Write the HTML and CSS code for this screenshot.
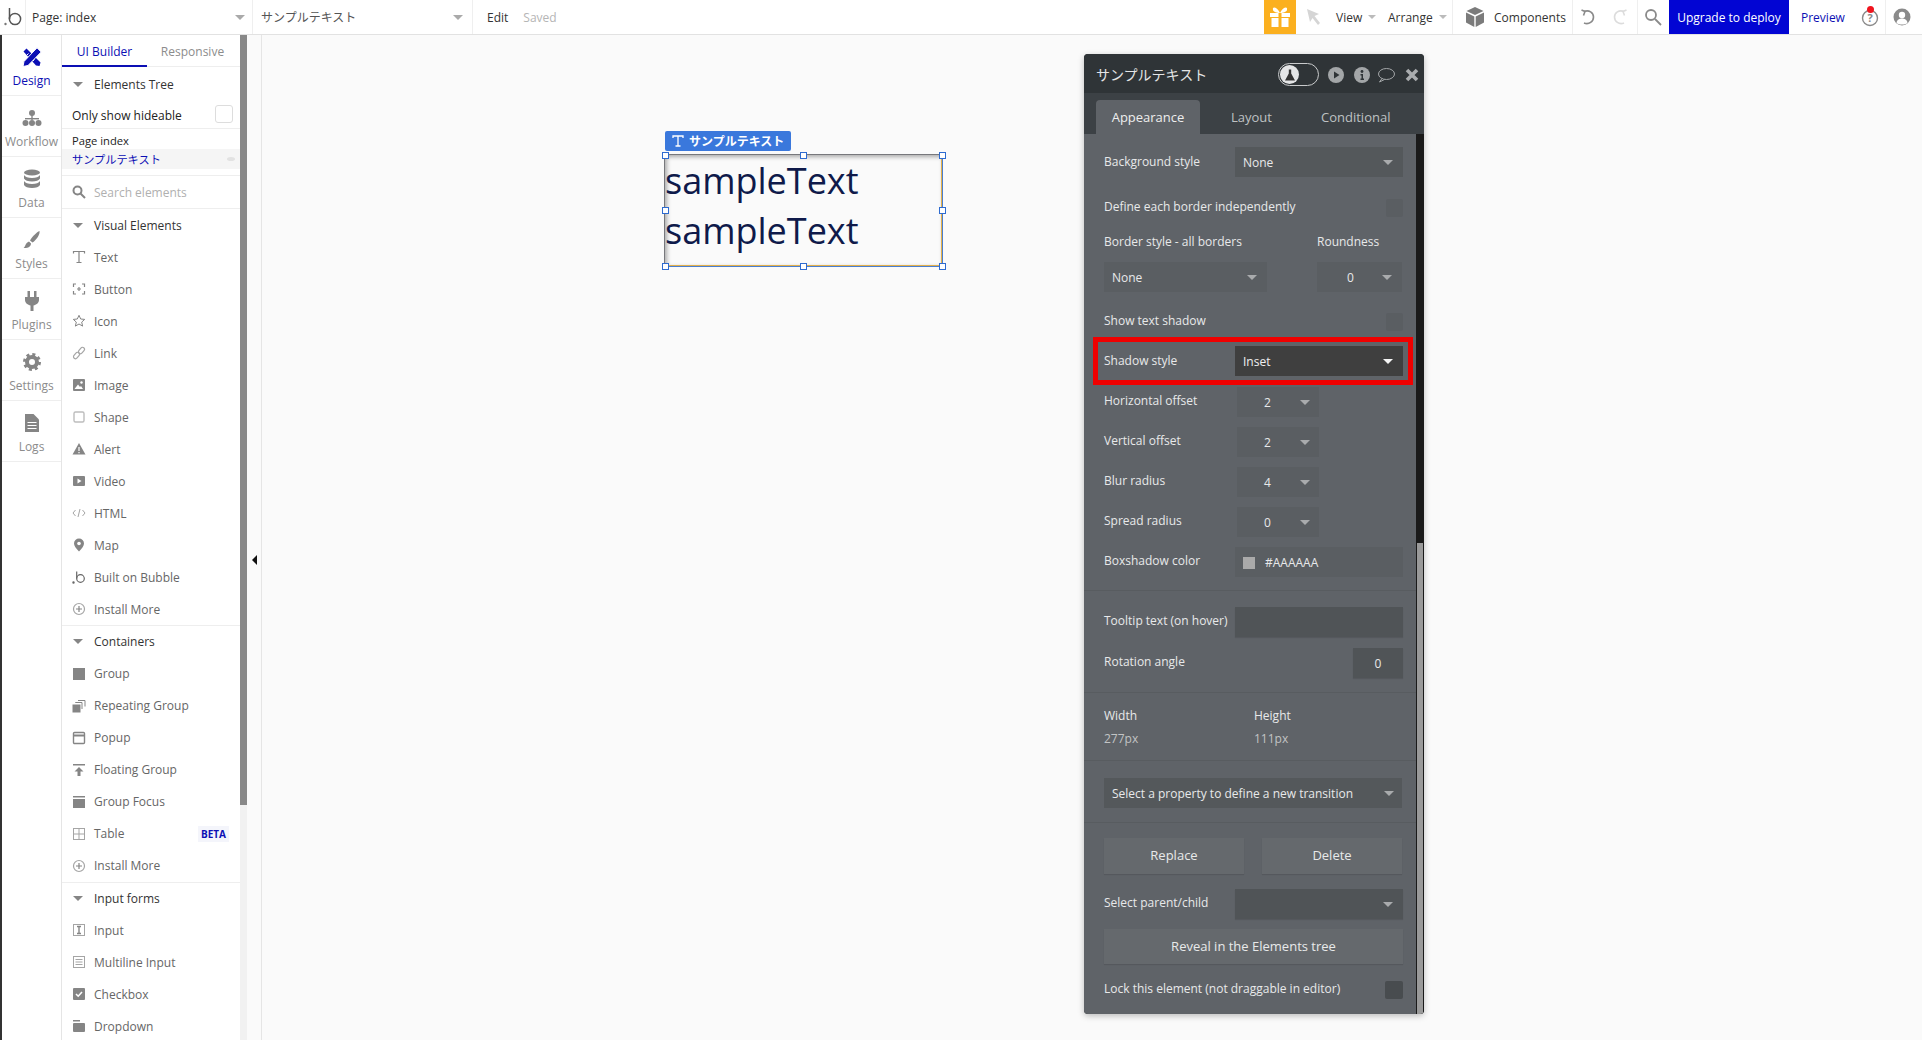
FILE: index.html
```html
<!DOCTYPE html>
<html lang="en">
<head>
    <meta charset="UTF-8">
    <title>Bubble editor</title>
    <link rel="stylesheet" href="styles.css">
</head>
<body>
    <header class="topbar">
        <div class="top-logo">
            <svg width="20" height="22" viewBox="0 0 20 22"><circle cx="12" cy="13" r="5.6" fill="none" stroke="#555" stroke-width="1.5"/><path d="M6.5 2v11" stroke="#555" stroke-width="1.5"/><circle cx="2.5" cy="18" r="1.2" fill="#777"/></svg>
        </div>
        <div class="top-select page-select"><span>Page: index</span><i class="caret"></i></div>
        <div class="top-select element-select"><span>サンプルテキスト</span><i class="caret"></i></div>
        <div class="top-edit"><span>Edit</span><span class="saved">Saved</span></div>
        <div class="top-gift">
            <svg width="22" height="22" viewBox="0 0 22 22" fill="#fff"><rect x="1" y="7" width="8.500" height="4"/><rect x="12.500" y="7" width="8.500" height="4"/><rect x="2.500" y="12" width="7" height="9"/><rect x="12.500" y="12" width="7" height="9"/><path d="M11 7C8 1 3 0 4 4c.4 1.800 4 3 7 3zm0 0c3-6 8-7 7-3-.4 1.800-4 3-7 3z"/></svg>
        </div>
        <div class="top-cursor">
            <svg width="16" height="18" viewBox="0 0 16 18" fill="#d5d5d5"><path d="M1 1l12 5-4.500 2L14 15l-2 2-5.500-7L4 14z"/></svg>
        </div>
        <div class="top-menu view-menu"><span>View</span><i class="caret small"></i></div>
        <div class="top-menu arrange-menu"><span>Arrange</span><i class="caret small"></i></div>
        <div class="top-components">
            <svg width="20" height="22" viewBox="0 0 20 22" fill="#7b7b7b"><path d="M10 1l8.500 4L10 9 1.500 5z"/><path d="M1 6.500l8.300 4V21L1 16.500z"/><path d="M19 6.500l-8.300 4V21l8.300-4.500z"/></svg>
            <span>Components</span>
        </div>
        <div class="top-history">
            <svg width="18" height="18" viewBox="0 0 18 18" fill="none" stroke="#8a8a8a" stroke-width="1.600"><path d="M5 3.500c5-2 9.500 1 9.500 5.500s-4.500 8-9.500 6"/><path d="M2.500 2l3.500 1.500-1.500 4"/></svg>
            <svg width="18" height="18" viewBox="0 0 18 18" fill="none" stroke="#dcdcdc" stroke-width="1.600"><path d="M13 3.500c-5-2-9.500 1-9.500 5.500s4.500 8 9.500 6"/><path d="M15.500 2L12 3.500l1.500 4"/></svg>
        </div>
        <div class="top-search">
            <svg width="18" height="18" viewBox="0 0 18 18" fill="none" stroke="#8a8a8a" stroke-width="1.800"><circle cx="7" cy="7" r="5"/><path d="M11 11l6 6"/></svg>
        </div>
        <div class="top-upgrade">Upgrade to deploy</div>
        <div class="top-preview">Preview</div>
        <div class="top-help">
            <svg width="18" height="20" viewBox="0 0 18 20"><circle cx="9" cy="11" r="7.500" fill="none" stroke="#8a8a8a" stroke-width="1.400"/><text x="9" y="15" text-anchor="middle" class="help-mark">?</text></svg>
            <i class="help-dot"></i>
        </div>
        <div class="top-user">
            <svg width="18" height="18" viewBox="0 0 18 18"><circle cx="9" cy="9" r="8.500" fill="#8a8a8a"/><circle cx="9" cy="7" r="3.200" fill="#fff"/><path d="M3.500 15c.5-3.500 3-4.500 5.500-4.500s5 1 5.500 4.500c-3 2-8 2-11 0z" fill="#fff"/></svg>
        </div>
    </header>

    <div class="main">
        <nav class="rail">
            <div class="rail-item active">
                <svg width="20" height="20" viewBox="0 0 20 20"><path d="M1.500 4.500l3-3 14 14-1 3.500-3.500-.5z" fill="#0c0fb4"/><path d="M5 8l1.500-1.500M8 11l1.500-1.500M11 14l1.500-1.500" stroke="#fff" stroke-width="1"/><path d="M15 .8l4.200 4.200L6 18.500l-5 1 1-5z" fill="#0c0fb4" stroke="#fff" stroke-width="1"/></svg>
                <span>Design</span>
            </div>
            <div class="rail-item">
                <svg width="20" height="18" viewBox="0 0 20 18" fill="#858585"><circle cx="10" cy="4" r="3"/><rect x="9.300" y="6" width="1.400" height="5"/><rect x="3" y="9" width="14" height="1.400"/><circle cx="3.500" cy="14" r="3"/><circle cx="10" cy="14" r="3"/><circle cx="16.500" cy="14" r="3"/></svg>
                <span>Workflow</span>
            </div>
            <div class="rail-item">
                <svg width="18" height="20" viewBox="0 0 18 20" fill="#858585"><ellipse cx="9" cy="3.500" rx="8" ry="3"/><path d="M1 6c1 2 4 3 8 3s7-1 8-3v3.500c-1 2-4 3-8 3s-7-1-8-3z"/><path d="M1 12c1 2 4 3 8 3s7-1 8-3v4c-1 2-4 3-8 3s-7-1-8-3z"/></svg>
                <span>Data</span>
            </div>
            <div class="rail-item">
                <svg width="20" height="20" viewBox="0 0 20 20" fill="#858585"><path d="M17.500 1c.8 3-3 9-7 11.500l-2.500-2C10 6.500 15 2 17.500 1z"/><path d="M7 11.500l2 2C9 17 5 18.500 1.500 18c2-1 1.500-5 5.500-6.500z"/></svg>
                <span>Styles</span>
            </div>
            <div class="rail-item">
                <svg width="16" height="20" viewBox="0 0 16 20" fill="#858585"><rect x="3.500" y="0" width="2.500" height="6"/><rect x="10" y="0" width="2.500" height="6"/><path d="M1 6h14v3c0 3-3 5-5.500 5.500V20h-3v-5.500C4 14 1 12 1 9z"/></svg>
                <span>Plugins</span>
            </div>
            <div class="rail-item">
                <svg width="18" height="18" viewBox="0 0 18 18"><circle cx="9" cy="9" r="5" fill="none" stroke="#858585" stroke-width="4"/><circle cx="9" cy="9" r="7.500" fill="none" stroke="#858585" stroke-width="3" stroke-dasharray="3 2.900"/></svg>
                <span>Settings</span>
            </div>
            <div class="rail-item">
                <svg width="14" height="18" viewBox="0 0 14 18"><path d="M0 0h8.500L14 5.500V18H0z" fill="#858585"/><path d="M2.500 8.500h9M2.500 11.500h9M2.500 14.500h9" stroke="#fff" stroke-width="1"/></svg>
                <span>Logs</span>
            </div>
        </nav>

        <aside class="panel">
            <div class="panel-tabs">
                <div class="panel-tab active">UI Builder</div>
                <div class="panel-tab second">Responsive</div>
            </div>
            <div class="section-head tree-head"><i class="caret"></i><span>Elements Tree</span></div>
            <div class="hideable"><span>Only show hideable</span><i class="hide-check"></i></div>
            <div class="tree">
                <div class="tree-page">Page index</div>
                <div class="tree-selected"><span>サンプルテキスト</span><i class="eye"></i></div>
            </div>
            <div class="search">
                <svg width="14" height="14" viewBox="0 0 14 14" fill="none" stroke="#858585" stroke-width="2"><circle cx="5.500" cy="5.500" r="4"/><path d="M8.500 8.500l4.500 4.500"/></svg>
                <span>Search elements</span>
            </div>

            <div class="section-head"><i class="caret"></i><span>Visual Elements</span></div>
            <div class="el"><svg viewBox="0 0 14 14" fill="none" stroke="#858585" stroke-width="1.200"><path d="M1.500 3.500V1.500h11v2M7 1.500v11M4.500 12.500h5"/></svg><span>Text</span></div>
            <div class="el"><svg viewBox="0 0 14 14" fill="none" stroke="#858585" stroke-width="1.200"><path d="M4 2H1.500v3M10 2h2.500v3M4 12H1.500V9M10 12h2.500V9M7 5v4M5 7h4"/></svg><span>Button</span></div>
            <div class="el"><svg viewBox="0 0 14 14" fill="none" stroke="#858585"><path d="M7 1.300l1.700 3.700 4 .4-3 2.700.9 4L7 10l-3.600 2.100.9-4-3-2.700 4-.4z"/></svg><span>Icon</span></div>
            <div class="el"><svg viewBox="0 0 14 14" fill="none" stroke="#a5a5a5" stroke-width="1.200"><rect x="7.500" y="1" width="4" height="7" rx="2" transform="rotate(40 9.500 4.500)"/><rect x="2.500" y="6" width="4" height="7" rx="2" transform="rotate(40 4.500 9.500)"/></svg><span>Link</span></div>
            <div class="el"><svg viewBox="0 0 14 14"><rect x="1" y="1" width="12" height="12" rx="1" fill="#858585"/><path d="M2.500 11l3.500-4.500 2 2.500 1-1 2 3z" fill="#fff"/><circle cx="9.500" cy="4.500" r="1.200" fill="#fff"/></svg><span>Image</span></div>
            <div class="el"><svg viewBox="0 0 14 14"><rect x="2" y="2" width="10" height="10" rx="1.500" fill="none" stroke="#bdbdbd" stroke-width="1.400"/></svg><span>Shape</span></div>
            <div class="el"><svg viewBox="0 0 14 14"><path d="M7 1l6.500 11.500h-13z" fill="#858585"/><path d="M7 5v4M7 10v1.300" stroke="#fff" stroke-width="1.200"/></svg><span>Alert</span></div>
            <div class="el"><svg viewBox="0 0 14 14"><rect x="1" y="2" width="12" height="10" rx="1" fill="#858585"/><path d="M5.500 4.500l4 2.500-4 2.500z" fill="#fff"/></svg><span>Video</span></div>
            <div class="el"><svg viewBox="0 0 14 14" fill="none" stroke="#a5a5a5"><path d="M3.500 4L1 7l2.500 3M10.500 4L13 7l-2.500 3M8 3L6 11"/></svg><span>HTML</span></div>
            <div class="el"><svg viewBox="0 0 14 14"><path d="M7 13.500C4 10 2 8 2 5.500a5 5 0 0 1 10 0C12 8 10 10 7 13.500z" fill="#858585"/><circle cx="7" cy="5.500" r="1.800" fill="#fff"/></svg><span>Map</span></div>
            <div class="el"><svg viewBox="0 0 14 14" fill="none" stroke="#666" stroke-width="1.200"><circle cx="8.500" cy="8.500" r="3.800"/><path d="M4.700 1.500v7"/><circle cx="1.500" cy="12.500" r=".6" fill="#666"/></svg><span>Built on Bubble</span></div>
            <div class="el"><svg viewBox="0 0 14 14" fill="none" stroke="#a5a5a5" stroke-width="1.200"><circle cx="7" cy="7" r="5.500"/><path d="M7 4v6M4 7h6" stroke="#858585"/></svg><span>Install More</span></div>

            <div class="section-head split"><i class="caret"></i><span>Containers</span></div>
            <div class="el"><svg viewBox="0 0 14 14"><rect x="1" y="1" width="12" height="12" fill="#858585"/></svg><span>Group</span></div>
            <div class="el"><svg viewBox="0 0 14 14" fill="none" stroke="#858585"><rect x="1" y="6" width="7" height="7" fill="#858585"/><path d="M3.500 4V3.500H10V10M6 1.500h7v6"/></svg><span>Repeating Group</span></div>
            <div class="el"><svg viewBox="0 0 14 14" fill="none" stroke="#858585" stroke-width="1.400"><rect x="1.500" y="1.500" width="11" height="11" rx="1"/><path d="M1.500 4.500h11" stroke-width="2"/></svg><span>Popup</span></div>
            <div class="el"><svg viewBox="0 0 14 14" fill="#858585"><rect x="1" y="1" width="12" height="1.500"/><path d="M7 4l4.500 4.500H8.500V13h-3V8.500h-3z"/></svg><span>Floating Group</span></div>
            <div class="el"><svg viewBox="0 0 14 14" fill="#858585"><rect x="1" y="1" width="12" height="1.500"/><rect x="1" y="4" width="12" height="9"/></svg><span>Group Focus</span></div>
            <div class="el"><svg viewBox="0 0 14 14" fill="none" stroke="#a5a5a5"><rect x="1.500" y="1.500" width="11" height="11"/><path d="M7 1.500v11M1.500 7h11"/></svg><span>Table</span><b class="beta">BETA</b></div>
            <div class="el"><svg viewBox="0 0 14 14" fill="none" stroke="#a5a5a5" stroke-width="1.200"><circle cx="7" cy="7" r="5.500"/><path d="M7 4v6M4 7h6" stroke="#858585"/></svg><span>Install More</span></div>

            <div class="section-head split"><i class="caret"></i><span>Input forms</span></div>
            <div class="el"><svg viewBox="0 0 14 14" fill="none" stroke="#a5a5a5"><rect x="1.500" y="1.500" width="11" height="11"/><path d="M5 3.500h4M5 10.500h4M7 3.500v7" stroke="#858585" stroke-width="1.400"/></svg><span>Input</span></div>
            <div class="el"><svg viewBox="0 0 14 14" fill="none" stroke="#a5a5a5"><rect x="1.500" y="1.500" width="11" height="11"/><path d="M3.500 4.500h7M3.500 7h7M3.500 9.500h7"/></svg><span>Multiline Input</span></div>
            <div class="el"><svg viewBox="0 0 14 14"><rect x="1" y="1" width="12" height="12" rx="1" fill="#858585"/><path d="M4 7l2.200 2.200L10 5" fill="none" stroke="#fff" stroke-width="1.600"/></svg><span>Checkbox</span></div>
            <div class="el"><svg viewBox="0 0 14 14" fill="#858585"><rect x="1" y="1" width="7" height="1.500"/><rect x="1" y="4" width="12" height="9" rx="1"/></svg><span>Dropdown</span></div>
        </aside>

        <div class="panel-scroll"><div class="panel-thumb"></div></div>
        <div class="collapse-strip"><i class="collapse-arrow"></i></div>
        <div class="canvas"></div>
    </div>

    <!-- selected element on the page canvas -->
    <div class="selected-tag">
        <svg width="12" height="12" viewBox="0 0 12 12" fill="none" stroke="#fff" stroke-width="1.300"><path d="M1 3V1h10v2M6 1v10M3.500 11h5"/></svg>
        <span>サンプルテキスト</span>
    </div>
    <div class="selected-box">
        <p>sampleText<br>sampleText</p>
        <i class="handle h-tl"></i><i class="handle h-tm"></i><i class="handle h-tr"></i>
        <i class="handle h-ml"></i><i class="handle h-mr"></i>
        <i class="handle h-bl"></i><i class="handle h-bm"></i><i class="handle h-br"></i>
    </div>

    <!-- property editor window -->
    <section class="editor">
        <div class="editor-title">
            <span class="editor-name">サンプルテキスト</span>
            <div class="lab-toggle">
                <i class="lab-knob"><svg width="12" height="12" viewBox="0 0 12 12" fill="#333"><path d="M4.800 .5h2.400v4L11 11.500H1l3.800-7z"/></svg></i>
            </div>
            <svg class="ed-icon play" width="16" height="16" viewBox="0 0 16 16"><circle cx="8" cy="8" r="8" fill="#a3a6a8"/><path d="M6 4.500L11.500 8 6 11.500z" fill="#2f3437"/></svg>
            <svg class="ed-icon info" width="16" height="16" viewBox="0 0 16 16"><circle cx="8" cy="8" r="8" fill="#a3a6a8"/><path d="M6.500 7h2.500v4.500h1V13H6.500v-1.500h1V8.500h-1z" fill="#2f3437"/><circle cx="8" cy="4.500" r="1.400" fill="#2f3437"/></svg>
            <svg class="ed-icon chat" width="18" height="16" viewBox="0 0 18 16" fill="none" stroke="#a3a6a8"><ellipse cx="9.500" cy="7" rx="8" ry="5.500"/><path d="M5 11.500L2.500 15l5-2.500"/></svg>
            <svg class="ed-icon close" width="14" height="14" viewBox="0 0 14 14" stroke="#a9acae" stroke-width="3.600"><path d="M2 2l10 10M12 2L2 12"/></svg>
        </div>
        <div class="editor-tabs">
            <div class="editor-tab active">Appearance</div>
            <div class="editor-tab layout">Layout</div>
            <div class="editor-tab conditional">Conditional</div>
        </div>
        <div class="editor-wrap">
            <div class="editor-body">
                <div class="row r-bg"><label>Background style</label><div class="sel wide"><span>None</span><i class="caret"></i></div></div>
                <div class="row r-check r-define"><label>Define each border independently</label><i class="check"></i></div>
                <div class="row r-heading"><label class="l-border">Border style - all borders</label><label>Roundness</label></div>
                <div class="row r-border"><div class="sel border-sel"><span>None</span><i class="caret"></i></div><div class="sel round-sel"><span>0</span><i class="caret"></i></div></div>
                <div class="row r-check r-shadow"><label>Show text shadow</label><i class="check"></i></div>
                <div class="row highlight"><label>Shadow style</label><div class="sel wide dark"><span>Inset</span><i class="caret"></i></div></div>
                <div class="row r-first"><label>Horizontal offset</label><div class="sel num"><span>2</span><i class="caret"></i></div></div>
                <div class="row r-next"><label>Vertical offset</label><div class="sel num"><span>2</span><i class="caret"></i></div></div>
                <div class="row r-next"><label>Blur radius</label><div class="sel num"><span>4</span><i class="caret"></i></div></div>
                <div class="row r-next"><label>Spread radius</label><div class="sel num"><span>0</span><i class="caret"></i></div></div>
                <div class="row r-next"><label>Boxshadow color</label><div class="sel wide color"><i class="swatch"></i><span>#AAAAAA</span></div></div>
                <hr class="d-color">
                <div class="row r-tooltip"><label>Tooltip text (on hover)</label><div class="field wide"></div></div>
                <div class="row r-rotation"><label>Rotation angle</label><div class="field angle">0</div></div>
                <hr class="d-rotation">
                <div class="row r-size"><label class="l-size">Width</label><label>Height</label></div>
                <div class="row r-size-val"><span class="l-size">277px</span><span>111px</span></div>
                <hr class="d-size">
                <div class="row r-transition"><div class="sel full"><span>Select a property to define a new transition</span><i class="caret"></i></div></div>
                <hr class="d-transition">
                <div class="row r-buttons"><div class="btn">Replace</div><div class="btn">Delete</div></div>
                <div class="row r-parent"><label>Select parent/child</label><div class="field wide"><i class="caret"></i></div></div>
                <div class="row r-reveal"><div class="btn reveal">Reveal in the Elements tree</div></div>
                <div class="row r-lock"><label>Lock this element (not draggable in editor)</label><i class="check lock"></i></div>
            </div>
            <div class="editor-scroll"><div class="editor-thumb"></div></div>
        </div>
    </section>
</body>
</html>
```

FILE: styles.css
```css
* {
    box-sizing: border-box;
}

html, body {
    margin: 0;
    height: 1040px;
    overflow: hidden;
}

body {
    position: relative;
    font-family: 'Open Sans', 'Noto Sans CJK JP', sans-serif;
    font-size: 12px;
    color: #333;
    background-color: #fff;
}

i {
    display: block;
    font-style: normal;
}

.caret {
    width: 0;
    height: 0;
    border-left: 5px solid transparent;
    border-right: 5px solid transparent;
    border-top: 5px solid #aaa;
}

.caret.small {
    border-left-width: 4px;
    border-right-width: 4px;
    border-top: 4px solid #bbb;
}

/* top bar */
.topbar {
    display: flex;
    align-items: stretch;
    height: 35px;
    border-bottom: 1px solid #e2e2e2;
}

.topbar > div {
    display: flex;
    align-items: center;
    flex-shrink: 0;
}

.top-logo {
    width: 26px;
    padding-left: 3px;
    border-right: 1px solid #efefef;
}

.top-select {
    justify-content: space-between;
    border-right: 1px solid #efefef;
}

.page-select {
    width: 227px;
    padding: 0 7px 0 6px;
}

.element-select {
    width: 220px;
    padding: 0 9px 0 8px;
    color: #555;
}

.top-edit {
    width: 791px;
    padding-left: 14px;
    gap: 15px;
}

.saved {
    color: #b5b5b5;
}

.top-gift {
    width: 32px;
    justify-content: center;
    background-color: #fbb01f;
}

.top-cursor {
    width: 36px;
    padding-left: 10px;
}

.view-menu {
    width: 56px;
    gap: 6px;
    padding-left: 4px;
}

.arrange-menu {
    width: 65px;
    gap: 6px;
    border-right: 1px solid #efefef;
}

.top-components {
    width: 120px;
    gap: 9px;
    padding-left: 12px;
    border-right: 1px solid #efefef;
}

.top-history {
    width: 65px;
    gap: 14px;
    padding-left: 6px;
    border-right: 1px solid #efefef;
}

.top-search {
    width: 31px;
    padding-left: 6px;
}

.top-upgrade {
    width: 120px;
    justify-content: center;
    color: #fff;
    background-color: #0205d3;
}

.top-preview {
    width: 68px;
    padding-left: 12px;
    color: #0c0fb4;
}

.top-help {
    position: relative;
    width: 29px;
    padding-left: 4px;
    border-right: 1px solid #efefef;
}

.help-mark {
    font-size: 11px;
    font-weight: 700;
    fill: #8a8a8a;
}

.help-dot {
    position: absolute;
    left: 10px;
    top: 6px;
    width: 7px;
    height: 7px;
    border-radius: 50%;
    background-color: #f0141e;
}

.top-user {
    width: 36px;
    padding-left: 7px;
}

/* left side */
.main {
    display: flex;
    height: 1005px;
}

.rail {
    width: 62px;
    flex-shrink: 0;
    border-left: 2px solid #333;
    border-right: 1px solid #e5e5e5;
}

.rail-item {
    display: flex;
    flex-direction: column;
    align-items: center;
    justify-content: space-between;
    height: 61px;
    padding: 12px 0 6px;
    border-bottom: 1px solid #eee;
    color: #8c8c8c;
}

.rail-item svg {
    height: 20px;
}

.rail-item.active {
    color: #0c0fb4;
}

.panel {
    width: 178px;
    flex-shrink: 0;
    overflow: hidden;
}

.panel-tabs {
    display: flex;
    height: 32px;
    border-bottom: 1px solid #eee;
}

.panel-tab {
    width: 85px;
    height: 32px;
    padding-top: 8px;
    text-align: center;
    color: #8c8c8c;
}

.panel-tab.active {
    color: #0c0fb4;
    border-bottom: 2px solid #0c0fb4;
}

.panel-tab.second {
    margin-left: 3px;
}

.section-head {
    display: flex;
    align-items: center;
    gap: 11px;
    height: 32px;
    padding-left: 11px;
    color: #333;
}

.section-head .caret {
    border-top-color: #858585;
}

.section-head.split {
    height: 32.5px;
    border-top: 1px solid #eee;
}

.tree-head {
    height: 35px;
}

.hideable {
    display: flex;
    align-items: center;
    justify-content: space-between;
    height: 27px;
    padding: 0 7px 0 10px;
    border-bottom: 1px solid #eee;
    color: #222;
}

.hide-check {
    width: 18px;
    height: 18px;
    margin-top: -2px;
    border: 1px solid #ddd;
    border-radius: 3px;
}

.tree {
    height: 47px;
    padding-top: 4px;
    border-bottom: 1px solid #eee;
    font-size: 11.2px;
}

.tree-page {
    height: 16px;
    line-height: 16px;
    padding-left: 10px;
    color: #222;
}

.tree-selected {
    display: flex;
    align-items: center;
    justify-content: space-between;
    height: 20px;
    padding: 0 5px 0 10px;
    background-color: #f5f5f5;
    color: #0c0fb4;
}

.eye {
    width: 8px;
    height: 4px;
    border-radius: 50%;
    background-color: #e2e2e2;
}

.search {
    display: flex;
    align-items: center;
    gap: 8px;
    height: 33px;
    padding-left: 10px;
    border-bottom: 1px solid #eee;
    color: #b0b0b0;
}

.el {
    display: flex;
    align-items: center;
    height: 32px;
    padding-left: 10px;
    color: #666;
}

.el svg {
    width: 14px;
    height: 14px;
    margin-right: 8px;
    flex-shrink: 0;
}

.beta {
    margin: 0 11px 0 auto;
    padding: 1px 3px;
    background-color: #f4f5fb;
    color: #0c0fb4;
    font-size: 10px;
}

.panel-scroll {
    width: 7px;
    flex-shrink: 0;
    background-color: #f1f1f1;
}

.panel-thumb {
    height: 770px;
    background-color: #888;
}

.collapse-strip {
    position: relative;
    width: 15px;
    flex-shrink: 0;
    background-color: #fafafa;
    border-right: 1px solid #e5e5e5;
}

.collapse-arrow {
    position: absolute;
    left: 5px;
    top: 520px;
    width: 0;
    height: 0;
    border-top: 5px solid transparent;
    border-bottom: 5px solid transparent;
    border-right: 5px solid #111;
}

.canvas {
    flex: 1;
    background-color: #fafafa;
}

/* element on the canvas */
.selected-tag {
    position: absolute;
    left: 665px;
    top: 131px;
    display: flex;
    align-items: center;
    gap: 5px;
    width: 126px;
    height: 20px;
    padding-left: 7px;
    border-radius: 2px;
    background-color: #3a78dc;
    color: #fff;
    font-weight: 700;
}

.selected-box {
    position: absolute;
    left: 664px;
    top: 154px;
    width: 278px;
    height: 112px;
    padding-top: 1px;
    border: 1px solid #e3b04b;
    border-top-color: #77787c;
    border-left-color: #77787c;
    box-shadow: inset 2px 2px 4px #aaa, 1px 1px 0 #4a7fd0;
}

.selected-box p {
    margin: 0;
    font-size: 36px;
    line-height: 50px;
    color: #0f1a4a;
}

.handle {
    position: absolute;
    width: 7px;
    height: 7px;
    border: 1px solid #2e6bd0;
    background-color: #fff;
}

.h-tl, .h-ml, .h-bl { left: -3px; }
.h-tm, .h-bm { left: 135px; }
.h-tr, .h-mr, .h-br { left: 274px; }
.h-tl, .h-tm, .h-tr { top: -3px; }
.h-ml, .h-mr { top: 52px; }
.h-bl, .h-bm, .h-br { top: 108px; }

/* property editor */
.editor {
    position: absolute;
    left: 1084px;
    top: 54px;
    display: flex;
    flex-direction: column;
    width: 340px;
    height: 960px;
    border-radius: 4px;
    background-color: #2f3437;
    box-shadow: 0 2px 6px rgba(0, 0, 0, 0.25);
    color: #e8e9ea;
    overflow: hidden;
}

.editor-title {
    position: relative;
    height: 39px;
    flex-shrink: 0;
    background-color: #2f3437;
}

.editor-name {
    position: absolute;
    left: 12px;
    top: 10px;
    font-size: 14px;
    color: #e4e5e6;
}

.lab-toggle {
    position: absolute;
    left: 194px;
    top: 9px;
    width: 41px;
    height: 23px;
    border: 1px solid #c9cbcc;
    border-radius: 12px;
}

.lab-knob {
    display: flex;
    align-items: center;
    justify-content: center;
    width: 19px;
    height: 19px;
    margin: 1px;
    border-radius: 50%;
    background-color: #e4e5e6;
}

.ed-icon {
    position: absolute;
    top: 13px;
}

.play { left: 244px; }
.info { left: 270px; }
.chat { left: 293px; }
.close { left: 321px; top: 14px; }

.editor-tabs {
    position: relative;
    height: 41px;
    flex-shrink: 0;
    background-color: #3c4145;
    font-size: 13px;
    color: #bfc1c3;
}

.editor-tab {
    position: absolute;
    top: 7px;
    height: 34px;
    line-height: 34px;
}

.editor-tab.active {
    left: 12px;
    width: 104px;
    border-radius: 4px 4px 0 0;
    background-color: #5f6368;
    text-align: center;
    color: #eee;
}

.layout { left: 147px; }
.conditional { left: 237px; }

.editor-wrap {
    display: flex;
    flex: 1;
    min-height: 0;
}

.editor-body {
    width: 332px;
    padding: 0 13px 0 20px;
    background-color: #5f6368;
}

.editor-scroll {
    position: relative;
    width: 8px;
    background-color: #1a1a1a;
}

.editor-thumb {
    position: absolute;
    left: 1px;
    right: 1px;
    top: 409px;
    bottom: 0;
    background-color: #9a9a9a;
}

.row {
    display: flex;
    align-items: center;
    justify-content: flex-start;
}

.row label {
    flex-shrink: 0;
    margin-bottom: 2px;
    line-height: 14px;
    white-space: nowrap;
}

.row > label:first-child {
    min-width: 131px;
}

.r-bg label, .highlight label {
    margin-bottom: 0;
}

.sel, .field {
    display: flex;
    align-items: center;
    justify-content: space-between;
    height: 30px;
    padding: 1px 10px 0 8px;
    background-color: #54585b;
}

.sel .caret, .field .caret {
    border-top-color: #a9abad;
}

.wide {
    width: 168px;
    flex-shrink: 0;
}

.full {
    width: 298px;
    padding: 0 8px;
}

.dark {
    background-color: #3f3f3f;
    color: #f0f0f0;
}

.dark .caret {
    border-top-color: #f5f5f5;
}

.num {
    width: 82px;
    margin-left: 2px;
    padding: 1px 9px 0 27px;
    background-color: #5a5e62;
}

.color {
    justify-content: flex-start;
    gap: 10px;
    background-color: #5a5e62;
}

.swatch {
    width: 12px;
    height: 12px;
    background-color: #aaa;
}

.check {
    width: 17px;
    height: 18px;
    margin-left: auto;
    border-radius: 2px;
    background-color: #5a5e62;
}

.check.lock {
    width: 18px;
    background-color: #484c4f;
}

.field {
    background-color: #505457;
    box-shadow: 0 1px 1px rgba(0, 0, 0, 0.1);
}

.field.wide {
    justify-content: flex-end;
}

.angle {
    width: 50px;
    margin-left: auto;
    justify-content: center;
    padding: 0;
}

.r-bg { padding-top: 13px; }
.r-define { margin-top: 22px; }
.r-heading { height: 18px; margin-top: 17px; }
.l-border { width: 213px; }
.r-border { margin-top: 10px; }
.border-sel { width: 163px; }
.round-sel { width: 85px; margin-left: 50px; padding-left: 30px; }
.r-border .sel { background-color: #5a5e62; }
.r-shadow { margin-top: 21px; }

.highlight {
    height: 48px;
    margin: 6px -10px 0 -11px;
    padding: 0 5px 0 6px;
    border: 5px solid #f00000;
}

.r-first { margin-top: 2px; }
.r-next { margin-top: 10px; }

hr {
    height: 1px;
    margin: 0 -13px 0 -20px;
    border: 0;
    background-color: #585c60;
}

.d-color { margin-top: 13px; }
.r-tooltip { margin-top: 16px; }
.r-rotation { margin-top: 11px; }
.d-rotation { margin-top: 14px; }
.r-size { height: 18px; margin-top: 15px; }
.l-size { width: 150px; }
.r-size-val { height: 18px; margin-top: 3px; color: #c2c4c5; }
.d-size { margin-top: 13px; }
.r-transition { margin-top: 17px; }
.d-transition { margin-top: 14px; }
.r-buttons { gap: 18px; margin-top: 15px; }

.btn {
    display: flex;
    align-items: center;
    justify-content: center;
    width: 140px;
    height: 36px;
    padding-bottom: 2px;
    background-color: #65696d;
    box-shadow: 0 1px 1px rgba(0, 0, 0, 0.1);
    font-size: 13px;
}

.btn.reveal {
    width: 299px;
    height: 35px;
}

.r-parent { margin-top: 15px; }
.r-reveal { margin-top: 10px; }
.r-lock { height: 18px; margin-top: 17px; }
```
